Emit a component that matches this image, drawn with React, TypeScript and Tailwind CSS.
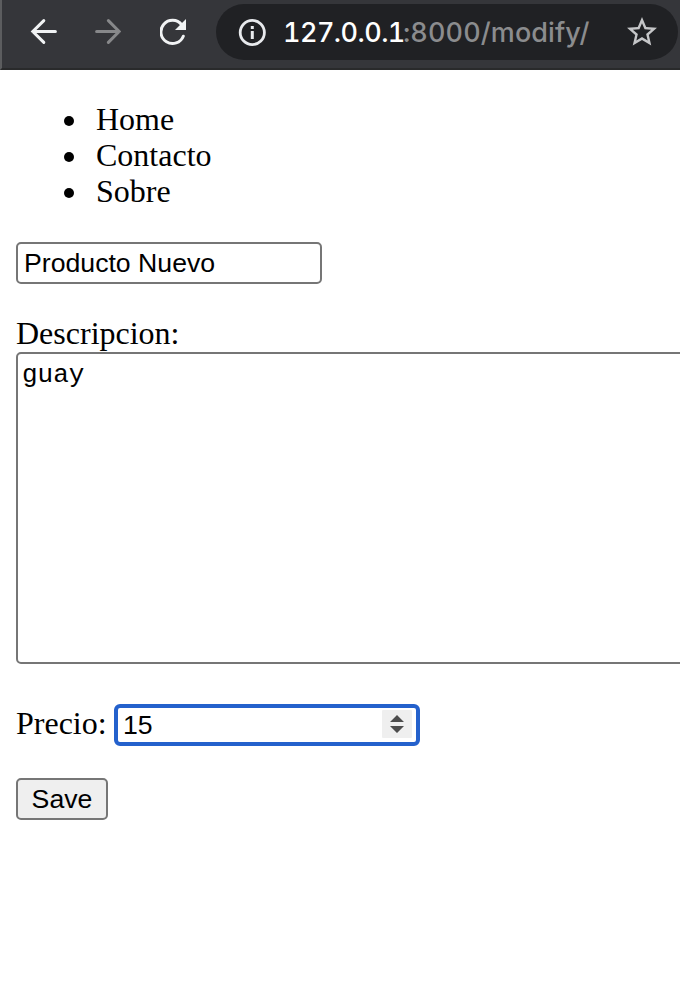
import React from 'react';

function BackIcon() {
  return (
    <svg className="h-7 w-7 shrink-0" viewBox="0 0 28 28" fill="none" stroke="#f1f3f4" strokeWidth="3" strokeLinecap="round">
      <path d="M26.4 13.5H4M14.8 2.6L3.8 13.5L14.8 24.4" strokeLinejoin="miter" />
    </svg>
  );
}

function ForwardIcon() {
  return (
    <svg className="h-7 w-7 shrink-0" viewBox="0 0 28 28" fill="none" stroke="#87888a" strokeWidth="3" strokeLinecap="round">
      <path d="M3.6 13.5H26M15.4 2.6L26.2 13.5L15.4 24.4" strokeLinejoin="miter" />
    </svg>
  );
}

function ReloadIcon() {
  return (
    <svg className="h-7 w-7 shrink-0" viewBox="0 0 28 28" fill="none">
      <path d="M23.3 18.2A11.6 11.6 0 1 1 21.6 6.7" stroke="#f1f3f4" strokeWidth="3" strokeLinecap="round" />
      <path d="M26 1V12H15Z" fill="#f1f3f4" />
    </svg>
  );
}

function InfoIcon() {
  return (
    <svg className="h-7 w-7 shrink-0" viewBox="0 0 28 28" fill="none">
      <circle cx="14.3" cy="14.5" r="12.1" stroke="#e8eaed" strokeWidth="2.8" />
      <path d="M12.8 8H15.8V11H12.8ZM12.8 13H15.8V21H12.8Z" fill="#e8eaed" />
    </svg>
  );
}

function StarIcon() {
  return (
    <svg className="h-9 w-9 shrink-0" viewBox="0 0 24 24" fill="#c5c6c8">
      <path d="M22 9.24l-7.19-.62L12 2 9.19 8.63 2 9.24l5.46 4.73L5.82 21 12 17.27 18.18 21l-1.63-7.03L22 9.24zM12 15.4l-3.76 2.27 1-4.28-3.32-2.88 4.38-.38L12 6.1l1.71 4.04 4.38.38-3.32 2.88 1 4.28L12 15.4z" />
    </svg>
  );
}

function Toolbar() {
  return (
    <header className="flex h-[70px] w-full items-start border-b-2 border-l-2 border-b-[#292a2b] border-l-[#5c5d5f] bg-[#35363a]">
      <nav className="flex pt-[18px] pl-[27px]">
        <BackIcon />
        <span className="w-[36px]" />
        <ForwardIcon />
        <span className="w-[39px]" />
        <ReloadIcon />
      </nav>
      <div className="mt-1 ml-[28px] flex h-14 w-[462px] shrink-0 items-center rounded-full bg-[#202124] pl-[22px]">
        <InfoIcon />
        <div className="ml-[17px] flex w-[341px] pt-px font-['Inter',sans-serif] text-[27px] leading-8 font-medium whitespace-nowrap text-[#8b8c8e] tabular-nums">
          <span className="w-[120px] tracking-[-0.55px] text-white">127.0.0.1</span>
          <span className="tracking-[0.1px]">:8000/modify/</span>
        </div>
        <StarIcon />
      </div>
    </header>
  );
}

export default function App() {
  return (
    <div className="h-[1004px] w-[680px] overflow-hidden bg-white font-['Liberation_Serif',serif] text-[32px] leading-9 text-black">
      <Toolbar />
      <main className="pl-4">
        <ul className="pt-8 pl-12">
          {['Home', 'Contacto', 'Sobre'].map((item) => (
            <li key={item} className="flex h-9 items-center">
              <span className="mt-0.5 mr-[22px] h-2.5 w-2.5 rounded-full bg-black" />
              <span className="pb-0.5">{item}</span>
            </li>
          ))}
        </ul>
        <input
          className="mt-8 block h-[42px] w-[306px] rounded-[5px] border-2 border-[#767676] px-1.5 font-['Liberation_Sans',sans-serif] text-[26.67px] leading-[30px]"
          defaultValue="Producto Nuevo"
        />
        <label className="mt-[31px] block h-[37px]">Descripcion:</label>
        <textarea
          className="block h-[312px] w-[730px] resize-none rounded-[5px] border-2 border-[#767676] px-1 py-1.5 font-['Liberation_Mono',monospace] text-[26px] leading-[30px] outline-none"
          defaultValue="guay"
        />
        <div className="mt-10 flex h-[42px] items-center">
          <label className="w-[98px] pb-1">Precio:</label>
          <div className="flex h-[42px] w-[306px] items-center justify-between rounded-[6px] border-4 border-[#2461cc] pr-1 pl-[5px] font-['Liberation_Sans',sans-serif] text-[26.67px]">
            <span>15</span>
            <svg className="mb-0.5 h-7 w-[30px]" viewBox="0 0 30 28">
              <rect width="30" height="28" rx="1" fill="#efefef" />
              <path d="M8 12L15 5L22 12ZM8 16H22L15 23Z" fill="#4d4d4d" />
            </svg>
          </div>
        </div>
        <button className="mt-8 block h-[42px] w-[92px] rounded-[5px] border-2 border-[#767676] bg-[#efefef] font-['Liberation_Sans',sans-serif] text-[26.67px] leading-[38px]">
          Save
        </button>
      </main>
    </div>
  );
}
